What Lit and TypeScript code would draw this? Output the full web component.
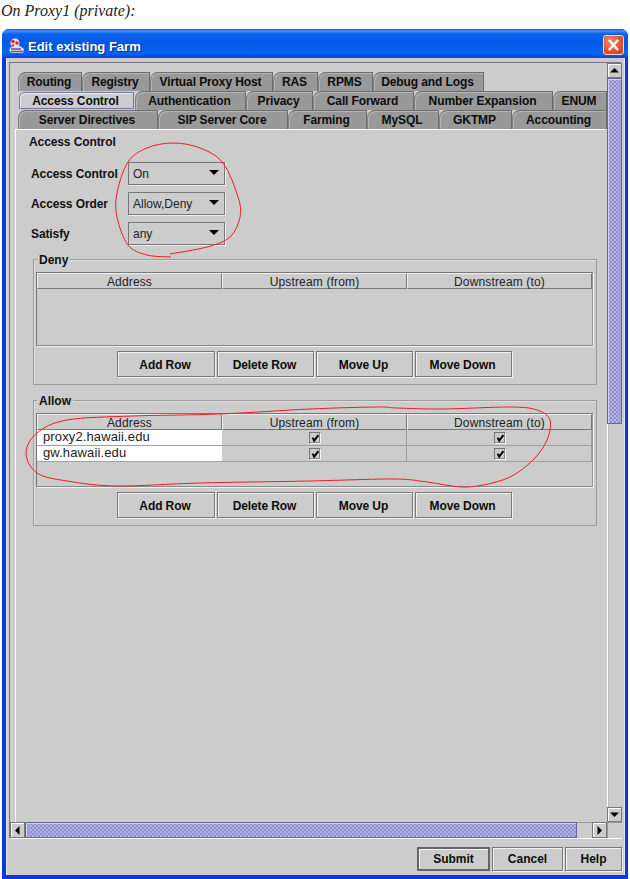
import { LitElement, html, css, svg } from "lit";
import { customElement } from "lit/decorators.js";

type Pt = [number, number];

const smooth = (p: Pt[], closed = false): string => {
  const at = (i: number): Pt =>
    closed ? p[(i + p.length) % p.length] : p[Math.max(0, Math.min(p.length - 1, i))];
  let d = `M${p[0][0]} ${p[0][1]}`;
  const n = closed ? p.length : p.length - 1;
  for (let i = 0; i < n; i++) {
    const [a, b, c, e] = [at(i - 1), at(i), at(i + 1), at(i + 2)];
    d += `C${b[0] + (c[0] - a[0]) / 6} ${b[1] + (c[1] - a[1]) / 6} ${c[0] - (e[0] - b[0]) / 6} ${c[1] - (e[1] - b[1]) / 6} ${c[0]} ${c[1]}`;
  }
  return d;
};

const CIRCLE: Pt[] = [
  [171, 257], [147, 255], [128, 245], [117, 217], [117, 193], [128, 162], [147, 148], [173, 143],
  [200, 148], [223, 163], [238, 197], [240, 217], [230, 237], [207, 247], [170, 254],
];
const LOOP: Pt[] = [
  [310, 409], [220, 414], [133, 416], [67, 420], [37, 433], [26, 453], [37, 473], [67, 481],
  [117, 486], [200, 483], [310, 481], [393, 479], [427, 482], [460, 487], [483, 485], [510, 477],
  [533, 460], [547, 440], [550, 420], [537, 410], [510, 407], [443, 409], [397, 408], [377, 407],
];

type Tab = [string, number];
const TAB_ROWS: Tab[][] = [
  [["Routing", 64], ["Registry", 68], ["Virtual Proxy Host", 123], ["RAS", 45], ["RPMS", 55], ["Debug and Logs", 111]],
  [["Access Control", 117], ["Authentication", 111], ["Privacy", 67], ["Call Forward", 101], ["Number Expansion", 139], ["ENUM", 54]],
  [["Server Directives", 140], ["SIP Server Core", 130], ["Farming", 79], ["MySQL", 72], ["GKTMP", 73], ["Accounting", 95]],
];

const COLS = ["Address", "Upstream (from)", "Downstream (to)"];

@customElement("app-root")
export class AppRoot extends LitElement {
  static styles = css`
    :host {
      display: block;
      width: 630px;
      height: 879px;
      position: relative;
      overflow: hidden;
      background: #fff;
      font-family: "Liberation Sans", Arial, sans-serif;
      font-size: 12px;
      color: #111;
    }
    .caption {
      height: 29px;
      box-sizing: border-box;
      padding: 2px 0 0 1px;
      font: italic 16px/18px "Liberation Serif", "Times New Roman", serif;
      color: #222;
    }
    .window {
      margin-left: 2px;
      width: 626px;
      height: 850px;
      box-sizing: border-box;
      display: flex;
      flex-direction: column;
      background: #0a3ade;
      border-radius: 7px 7px 0 0;
      padding: 0 3px 4px 4px;
    }
    .title {
      height: 29px;
      margin: 0 -3px 0 -4px;
      box-sizing: border-box;
      padding: 5px 4px 0 6px;
      display: flex;
      align-items: center;
      gap: 3px;
      border-radius: 7px 7px 0 0;
      background: linear-gradient(#0a56e0 0, #3d92f8 2px, #0a62ea 5px, #0457e4 14px, #0566f0 24px, #0445d8 29px);
      color: #fff;
      font-weight: bold;
      font-size: 13px;
      text-shadow: 1px 1px 1px #0a2a90;
    }
    .title span {
      flex: 1;
    }
    .close {
      width: 21px;
      height: 20px;
      margin-top: -2px;
      box-sizing: border-box;
      border: 1px solid #f4d8c8;
      border-radius: 3px;
      background: radial-gradient(circle at 35% 30%, #ee8a60, #dd4a22 70%);
      display: block;
    }
    .body {
      flex: 1;
      min-height: 0;
      background: #ccc;
      border-left: 1px solid #e8e8e8;
      border-right: 1px solid #e8e8e8;
      padding: 4px 2px 4px 2px;
      display: flex;
      flex-direction: column;
    }
    .pane {
      height: 777px;
      box-sizing: border-box;
      border: 1px solid #777;
      border-right-color: #fff;
      border-bottom-color: #fff;
      display: grid;
      grid-template-columns: 597px 15px;
      grid-template-rows: 759px 16px;
    }
    .view {
      overflow: hidden;
      padding-top: 9px;
      display: flex;
      flex-direction: column;
    }
    .tabrow {
      display: flex;
      height: 19px;
      padding-left: 8px;
      flex: none;
    }
    .tab {
      box-sizing: border-box;
      height: 19px;
      flex: none;
      padding-right: 2px;
      border: 1px solid #6e6e6e;
      border-bottom: none;
      border-left-color: #808080;
      border-top-left-radius: 8px;
      background: #999;
      box-shadow: inset 1px 1px 0 #b4b4b4;
      font-weight: bold;
      font-size: 12px;
      letter-spacing: -0.1px;
      line-height: 19px;
      text-align: center;
      white-space: nowrap;
      color: #0c0c0c;
    }
    .tab.active {
      height: 17px;
      margin: 1px 1px 1px 1px;
      background: #ccc;
      border: 1px solid #7474a8;
      border-top-left-radius: 6px;
      box-shadow: inset 1px 1px 0 #f0f0f0;
      line-height: 16px;
    }
    .panel {
      flex: 1;
      margin: 0 1px 0 5px;
      border-top: 1px solid #fff;
      border-left: 1px solid #fff;
      background: #ccc;
    }
    .heading {
      height: 24px;
      line-height: 24px;
      padding-left: 13px;
      font-weight: bold;
      letter-spacing: -0.1px;
    }
    .form {
      margin: 8px 0 0 15px;
      display: grid;
      grid-template-columns: 97px 97px;
      grid-auto-rows: 23px;
      row-gap: 7px;
      align-items: center;
    }
    .form label {
      font-weight: bold;
      white-space: nowrap;
      letter-spacing: -0.1px;
    }
    .combo {
      height: 23px;
      box-sizing: border-box;
      border: 1px solid #777;
      box-shadow: 1px 1px 0 #eee;
      padding: 0 5px 0 4px;
      display: flex;
      align-items: center;
      justify-content: space-between;
      color: #222;
    }
    .tri {
      width: 0;
      height: 0;
      border-left: 5.5px solid transparent;
      border-right: 5.5px solid transparent;
      border-top: 5px solid #000;
      margin-bottom: 2px;
    }
    .group {
      position: relative;
      margin: 14px 0 0 17px;
      width: 564px;
      height: 126px;
      box-sizing: border-box;
      border: 1px solid #9c9c9c;
      box-shadow: inset 1px 1px 0 #ddd;
      padding: 12px 3px 0 2px;
    }
    .group + .group {
      margin-top: 15px;
    }
    .legend {
      position: absolute;
      left: 3px;
      top: -7px;
      padding: 0 2px 0 2px;
      background: #ccc;
      font-weight: bold;
      line-height: 14px;
    }
    .table {
      height: 74px;
      box-sizing: border-box;
      border: 1px solid #777;
      border-right-color: #999;
      border-bottom-color: #888;
      box-shadow: 1px 1px 0 #eee;
    }
    .thead,
    .trow {
      display: grid;
      grid-template-columns: repeat(3, 185px);
    }
    .th {
      height: 16px;
      box-sizing: border-box;
      border-left: 1px solid #f0f0f0;
      border-top: 1px solid #f0f0f0;
      border-right: 1px solid #777;
      border-bottom: 1px solid #777;
      text-align: center;
      line-height: 16px;
      letter-spacing: 0.15px;
      color: #222;
    }
    .td {
      height: 16px;
      box-sizing: border-box;
      border-right: 1px solid #a0a0a0;
      border-bottom: 1px solid #a0a0a0;
      display: flex;
      align-items: center;
      justify-content: center;
      padding-left: 2px;
    }
    .td.addr {
      background: #fff;
      justify-content: flex-start;
      padding: 0 0 2px 6px;
      font-size: 13px;
      letter-spacing: 0.12px;
      color: #222;
      border-right: none;
    }
    .check {
      width: 12px;
      height: 12px;
      box-sizing: border-box;
      border: 1px solid #777;
      border-right-color: #f4f4f4;
      border-bottom-color: #f4f4f4;
      box-shadow: inset -1px -1px 0 #888;
      display: block;
    }
    .check path {
      fill: none;
      stroke: #000;
      stroke-width: 2;
    }
    .btnrow {
      display: flex;
      justify-content: center;
      gap: 2px;
      margin-top: 5px;
    }
    .btn {
      height: 26px;
      box-sizing: border-box;
      padding: 2px 2px 0 0;
      border: 1px solid #777;
      box-shadow: inset 1px 1px 0 #f2f2f2, 1px 1px 0 #f2f2f2;
      background: #ccc;
      display: flex;
      align-items: center;
      justify-content: center;
      font-weight: bold;
      letter-spacing: -0.1px;
      color: #0c0c0c;
      width: 97px;
    }
    .btn.wide {
      width: 98px;
    }
    .vbar {
      display: flex;
      flex-direction: column;
      background: #ccc;
    }
    .hbar {
      display: flex;
      background: #ccc;
    }
    .arrow {
      flex: none;
      width: 15px;
      height: 15px;
      box-sizing: border-box;
      background: #ccc;
      border: 1px solid #777;
      box-shadow: inset 1px 1px 0 #fff;
      display: flex;
      align-items: center;
      justify-content: center;
    }
    .hbar .arrow {
      height: 16px;
    }
    .thumb {
      box-sizing: border-box;
      border: 1px solid #666699;
      box-shadow: inset 1px 1px 0 #ccccff;
      background-color: #9c9ccc;
      background-image: conic-gradient(#b4b4e0 25%, #9090c4 0 50%, #b4b4e0 0 75%, #9090c4 0);
      background-size: 4px 4px;
    }
    .vbar .thumb {
      height: 346px;
    }
    .hbar .thumb {
      width: 552px;
    }
    .track {
      flex: 1;
      border-left: 1px solid #fff;
      box-shadow: inset 1px 0 0 #bbb;
    }
    .hbar .track {
      border-left: none;
      border-top: 1px solid #999;
      box-shadow: none;
    }
    .corner {
      background: #ccc;
      border-top: 1px solid #999;
      border-left: 1px solid #999;
    }
    .actions {
      margin-top: 8px;
      display: flex;
      justify-content: flex-end;
      gap: 2px;
    }
    .action {
      height: 24px;
      box-sizing: border-box;
      border: 1px solid #777;
      box-shadow: inset 1px 1px 0 #f2f2f2, 1px 1px 0 #f2f2f2;
      display: flex;
      align-items: center;
      justify-content: center;
      font-weight: bold;
      color: #0c0c0c;
    }
    .action.default {
      border: 2px solid #666;
      box-shadow: inset 1px 1px 0 #f2f2f2;
    }
    .w73 {
      width: 73px;
    }
    .w71 {
      width: 71px;
    }
    .w57 {
      width: 57px;
    }
    .ink {
      position: absolute;
      left: 0;
      top: 0;
      pointer-events: none;
    }
    .ink path {
      fill: none;
      stroke: #ee1c24;
      stroke-width: 1;
    }
  `;

  private tabs() {
    return TAB_ROWS.map(
      (row) => html`<div class="tabrow">
        ${row.map(
          ([name, w]) =>
            name === "Access Control"
              ? html`<div class="tab active" style="width:${w - 2}px">${name}</div>`
              : html`<div class="tab" style="width:${w}px">${name}</div>`
        )}
      </div>`
    );
  }

  private check() {
    return html`<svg class="check" viewBox="0 0 10 10">
      <path d="M2.6 4.6 L4.2 7.6 L8.4 2.2" />
    </svg>`;
  }

  private group(name: string, rows: string[]) {
    return html`<div class="group">
      <div class="legend">${name}</div>
      <div class="table">
        <div class="thead">${COLS.map((c) => html`<div class="th">${c}</div>`)}</div>
        ${rows.map(
          (r) => html`<div class="trow">
            <div class="td addr">${r}</div>
            <div class="td">${this.check()}</div>
            <div class="td">${this.check()}</div>
          </div>`
        )}
      </div>
      <div class="btnrow">
        <div class="btn wide">Add Row</div>
        <div class="btn">Delete Row</div>
        <div class="btn">Move Up</div>
        <div class="btn">Move Down</div>
      </div>
    </div>`;
  }

  private arrow(points: string) {
    return html`<div class="arrow">
      <svg width="9" height="9" viewBox="0 0 9 9"><polygon points=${points} fill="#000" /></svg>
    </div>`;
  }

  render() {
    return html`
      <div class="caption">On Proxy1 (private):</div>
      <div class="window">
        <div class="title">
          <svg width="17" height="17" viewBox="0 0 17 17">
            <circle cx="7" cy="5" r="4.6" fill="#e8e4e4" />
            <circle cx="5" cy="3.5" r="1.8" fill="#d8282c" />
            <circle cx="9" cy="5" r="1.7" fill="#d8282c" />
            <circle cx="5" cy="7.5" r="1.4" fill="#e0484c" />
            <path d="M3 9 L12 8 L16 11 L15 15 L3 15 L1 12 Z" fill="#e4e4ee" />
            <path d="M3 11 H13 M3 13.5 H15" stroke="#6a4aa8" stroke-width="1.3" />
          </svg>
          <span>Edit existing Farm</span>
          <svg class="close" viewBox="0 0 19 18">
            <path d="M5 4 L14 14 M14 4 L5 14" stroke="#fff" stroke-width="2.6" />
          </svg>
        </div>
        <div class="body">
          <div class="pane">
            <div class="view">
              ${this.tabs()}
              <div class="panel">
                <div class="heading">Access Control</div>
                <div class="form">
                  <label>Access Control</label>
                  <div class="combo">On<i class="tri"></i></div>
                  <label>Access Order</label>
                  <div class="combo">Allow,Deny<i class="tri"></i></div>
                  <label>Satisfy</label>
                  <div class="combo">any<i class="tri"></i></div>
                </div>
                ${this.group("Deny", [])}
                ${this.group("Allow", ["proxy2.hawaii.edu", "gw.hawaii.edu"])}
              </div>
            </div>
            <div class="vbar">
              ${this.arrow("4.5,2 9,6.5 0,6.5")}
              <div class="thumb"></div>
              <div class="track"></div>
              ${this.arrow("0,2.5 9,2.5 4.5,7")}
            </div>
            <div class="hbar">
              ${this.arrow("6.5,0 6.5,9 2,4.5")}
              <div class="thumb"></div>
              <div class="track"></div>
              ${this.arrow("2.5,0 2.5,9 7,4.5")}
            </div>
            <div class="corner"></div>
          </div>
          <div class="actions">
            <div class="action default w73">Submit</div>
            <div class="action w71">Cancel</div>
            <div class="action w57">Help</div>
          </div>
        </div>
      </div>
      <svg class="ink" width="630" height="879" viewBox="0 0 630 879">
        ${svg`<path d=${smooth(CIRCLE)} /><path d=${smooth(LOOP, true)} />`}
      </svg>
    `;
  }
}
